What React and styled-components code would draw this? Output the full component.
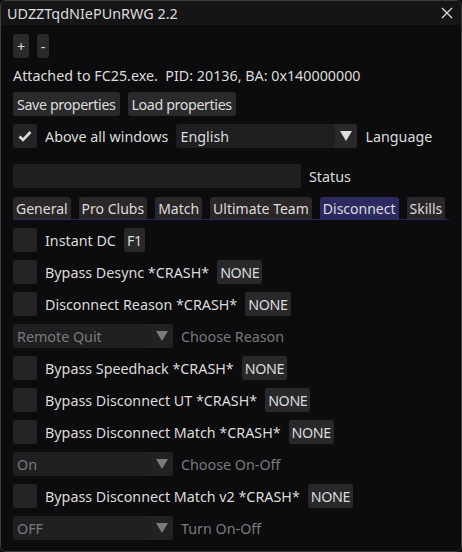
import React, { useState } from "react";
import styled, { createGlobalStyle } from "styled-components";

const GlobalStyle = createGlobalStyle`
  html, body {
    margin: 0;
    padding: 0;
    background: #0c0b0d;
  }
  * {
    box-sizing: border-box;
  }
`;

const Window = styled.div`
  width: 462px;
  height: 552px;
  border: 1px solid #3e3d40;
  border-radius: 6px;
  background: #0c0b0d;
  overflow: hidden;
  font-family: "Noto Sans", "Open Sans", sans-serif;
  font-size: 14.3px;
  color: #dcdcdc;
  display: flex;
  flex-direction: column;
`;

const TitleBar = styled.div`
  height: 24px;
  flex-shrink: 0;
  display: flex;
  align-items: center;
  justify-content: space-between;
  padding: 0 6px 0 6px;
  background: #151416;
  font-size: 14.4px;
`;

const CloseButton = styled.span`
  width: 16px;
  height: 16px;
  display: flex;
  align-items: center;
  justify-content: center;
  cursor: pointer;
`;

const Body = styled.div`
  padding: 9px 12px 0 12px;
  display: flex;
  flex-direction: column;
  gap: 8px;
`;

const Row = styled.div`
  display: flex;
  align-items: center;
  gap: 8px;
  height: ${(p) => (p.$text ? "18px" : "24px")};
  margin-top: ${(p) => (p.$spaced ? "8px" : "0")};
  white-space: nowrap;
`;

const Button = styled.button`
  height: 24px;
  padding: 0 4px;
  border: none;
  border-radius: 3px;
  background: #2a292c;
  color: #dcdcdc;
  font: inherit;
  letter-spacing: -0.4px;
  cursor: pointer;
  display: flex;
  align-items: center;
`;

const KeyBox = styled.span`
  height: 24px;
  padding: 0 3px;
  border-radius: 3px;
  background: #29282b;
  display: flex;
  align-items: center;
  letter-spacing: -0.4px;
`;

const Box = styled.span`
  width: 24px;
  height: 24px;
  border-radius: 3px;
  background: #242326;
  display: flex;
  align-items: center;
  justify-content: center;
  flex-shrink: 0;
  cursor: pointer;
`;

const Label = styled.span`
  color: ${(p) => (p.$muted ? "#7b7a7c" : "#dcdcdc")};
`;

const ComboFrame = styled.div`
  width: ${(p) => p.$width}px;
  height: 24px;
  border-radius: 3px;
  background: #1f1e21;
  display: flex;
  overflow: hidden;
  flex-shrink: 0;
`;

const ComboValue = styled.span`
  flex: 1;
  padding: 0 4px;
  display: flex;
  align-items: center;
  color: ${(p) => (p.$muted ? "#7b7a7c" : "#dcdcdc")};
`;

const ComboArrow = styled.span`
  width: 22px;
  display: flex;
  align-items: center;
  justify-content: center;
  background: ${(p) => (p.$muted ? "#222124" : "#29282b")};
`;

const Input = styled.div`
  width: 288px;
  height: 24px;
  border-radius: 3px;
  background: #1f1e21;
`;

const TabBar = styled.div`
  display: flex;
  gap: 8px;
  height: 24px;
  align-items: flex-end;
  border-bottom: 1px solid #2b2858;
  white-space: nowrap;
  font-size: 14px;
`;

const Tab = styled.span`
  height: 22px;
  padding: 0 3px;
  display: flex;
  align-items: center;
  flex-shrink: 0;
  border-radius: 3px 3px 0 0;
  background: ${(p) => (p.$active ? "#2d2a62" : "#2b2627")};
  cursor: pointer;
`;

const Check = () => (
  <svg width="16" height="16" viewBox="0 0 16 16">
    <path d="M2.5 8.5 L6 12 L13.5 4" fill="none" stroke="#dcdcdc" strokeWidth="2.6" />
  </svg>
);

const Arrow = ({ muted }) => (
  <svg width="12" height="10" viewBox="0 0 12 10">
    <path d="M0 0 H12 L6 10 Z" fill={muted ? "#7b7a7c" : "#dcdcdc"} />
  </svg>
);

const Checkbox = ({ checked, onToggle }) => (
  <Box onClick={onToggle}>{checked && <Check />}</Box>
);

const Combo = ({ value, width = 160, muted }) => (
  <ComboFrame $width={width}>
    <ComboValue $muted={muted}>{value}</ComboValue>
    <ComboArrow $muted={muted}>
      <Arrow muted={muted} />
    </ComboArrow>
  </ComboFrame>
);

const tabs = ["General", "Pro Clubs", "Match", "Ultimate Team", "Disconnect", "Skills"];

const options = [
  { id: "instant", label: "Instant DC", key: "F1" },
  { id: "desync", label: "Bypass Desync *CRASH*", key: "NONE" },
  { id: "reason", label: "Disconnect Reason *CRASH*", key: "NONE", combo: ["Remote Quit", "Choose Reason"] },
  { id: "speed", label: "Bypass Speedhack *CRASH*", key: "NONE" },
  { id: "ut", label: "Bypass Disconnect UT *CRASH*", key: "NONE" },
  { id: "match", label: "Bypass Disconnect Match *CRASH*", key: "NONE", combo: ["On", "Choose On-Off"] },
  { id: "match2", label: "Bypass Disconnect Match v2 *CRASH*", key: "NONE", combo: ["OFF", "Turn On-Off"] },
];

export default function App() {
  const [onTop, setOnTop] = useState(true);
  const [active, setActive] = useState("Disconnect");
  const [flags, setFlags] = useState({});

  const toggle = (id) => setFlags((f) => ({ ...f, [id]: !f[id] }));

  return (
    <>
      <GlobalStyle />
      <Window>
        <TitleBar>
          <span>UDZZTqdNIePUnRWG 2.2</span>
          <CloseButton>
            <svg width="12" height="12" viewBox="0 0 12 12">
              <path d="M1 1 L11 11 M11 1 L1 11" stroke="#dcdcdc" strokeWidth="1.3" />
            </svg>
          </CloseButton>
        </TitleBar>
        <Body>
          <Row>
            <Button>+</Button>
            <Button>-</Button>
          </Row>
          <Row $text>Attached to FC25.exe.&nbsp; PID: 20136, BA: 0x140000000</Row>
          <Row>
            <Button>Save properties</Button>
            <Button>Load properties</Button>
          </Row>
          <Row>
            <Checkbox checked={onTop} onToggle={() => setOnTop(!onTop)} />
            <Label>Above all windows</Label>
            <Combo value="English" width={181} />
            <Label>Language</Label>
          </Row>
          <Row $spaced>
            <Input />
            <Label>Status</Label>
          </Row>
          <TabBar>
            {tabs.map((t) => (
              <Tab key={t} $active={t === active} onClick={() => setActive(t)}>
                {t}
              </Tab>
            ))}
          </TabBar>
          {options.map((o) => (
            <React.Fragment key={o.id}>
              <Row>
                <Checkbox checked={!!flags[o.id]} onToggle={() => toggle(o.id)} />
                <Label>{o.label}</Label>
                <KeyBox>{o.key}</KeyBox>
              </Row>
              {o.combo && (
                <Row>
                  <Combo value={o.combo[0]} muted />
                  <Label $muted>{o.combo[1]}</Label>
                </Row>
              )}
            </React.Fragment>
          ))}
        </Body>
      </Window>
    </>
  );
}
